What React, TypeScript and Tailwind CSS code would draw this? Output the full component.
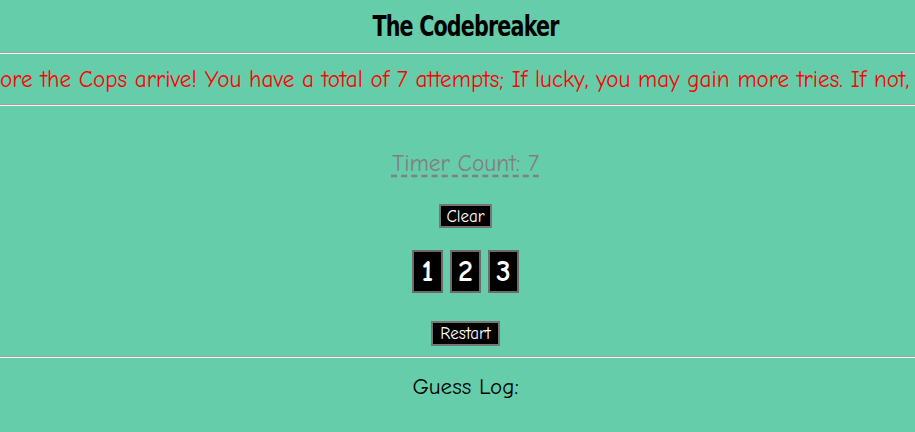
const comic = "font-['Comic_Sans_MS','Comic_Neue','DejaVu_Sans',sans-serif]";

function Rule() {
  return <div className="h-0 border-t border-b border-t-[#a0a0a0] border-b-[#f4f4f4]" />;
}

export default function App() {
  const digits = ["1", "2", "3"];

  return (
    <div className={`min-h-screen w-full bg-[#66cdaa] ${comic}`}>
      {/* Title */}
      <h1 className="flex h-[52px] items-center justify-center pl-[16px] pt-[1px] font-['Impact','DejaVu_Sans',sans-serif] font-stretch-condensed text-[28px] font-bold tracking-[-1px] text-black">
        <span className="inline-block scale-x-[0.82]">The Codebreaker</span>
      </h1>
      <Rule />

      {/* Marquee */}
      <div className="flex h-[50px] items-center overflow-hidden whitespace-nowrap pt-[3px] text-[23.2px] text-[#ff0000]">
        <span>ore the Cops arrive! You have a total of 7 attempts; If lucky, you may gain more tries. If not,</span>
      </div>
      <Rule />

      {/* Game */}
      <div className="flex flex-col items-center pl-[16px] pt-[43px]">
        <div className="h-[29px] text-[23.4px] leading-[29px] text-[#808080] underline decoration-dashed decoration-[#808080] underline-offset-[4px]">
          Timer Count: 7
        </div>

        <button className="mt-[26px] h-[24px] border-2 border-[#767676] bg-black px-[5px] text-[17px] leading-none text-white">
          Clear
        </button>

        <div className="mt-[22px] flex gap-[7px]">
          {digits.map((d) => (
            <div
              key={d}
              className="flex h-[43px] w-[31px] items-center justify-center border-2 border-[#6b6b6b] bg-black text-[30px] font-bold text-white"
            >
              {d}
            </div>
          ))}
        </div>

        <button className="mt-[28px] h-[25px] border-2 border-[#767676] bg-black px-[7px] text-[17px] leading-none text-white">
          Restart
        </button>
      </div>

      <div className="mt-[10px]">
        <Rule />
      </div>

      <div className="mt-[16px] flex h-[26px] items-center justify-center pl-[16px] text-[23px] text-black">
        Guess Log:
      </div>
    </div>
  );
}
